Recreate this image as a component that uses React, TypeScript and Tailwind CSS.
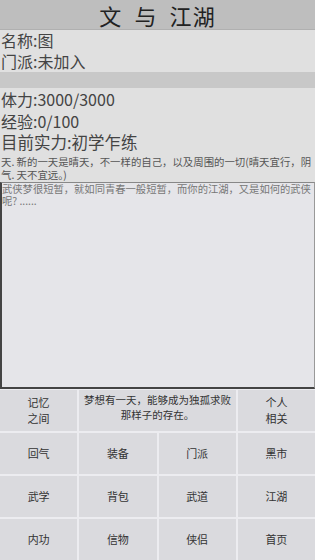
import React from 'react';

const font = { fontFamily: '"Noto Sans CJK SC", "Noto Sans", sans-serif' };

const rows = [
  ['回气', '装备', '门派', '黑市'],
  ['武学', '背包', '武道', '江湖'],
  ['内功', '信物', '侠侣', '首页'],
];

export default function App() {
  return (
    <div className="w-[315px] h-[560px] flex flex-col bg-[#e0e0e0] overflow-hidden" style={font}>
      {/* title */}
      <div className="h-[30px] shrink-0 bg-[#bebebe] border-b border-[#b0b0b0] flex items-center justify-center text-[22px] leading-none text-[#222] tracking-[0.05em]">
        文&nbsp;&nbsp;与&nbsp;&nbsp;江湖
      </div>

      {/* name / sect */}
      <div className="h-[42px] shrink-0 flex flex-col text-[16px] leading-[21px] text-[#444] pl-[1px]">
        <div>名称:图</div>
        <div>门派:未加入</div>
      </div>

      <div className="h-[16px] shrink-0 bg-[#c8c8c8]" />

      {/* stats */}
      <div className="flex flex-col text-[16px] leading-[21.5px] text-[#444] pl-[1px] pt-[1px]">
        <div>体力:3000/3000</div>
        <div>经验:0/100</div>
        <div className="text-[16.5px]">目前实力:初学乍练</div>
      </div>
      <div className="text-[10.4px] leading-[13px] text-[#555] pl-[1px] pt-[1px] pb-[1px]">
        天. 新的一天是晴天，不一样的自己，以及周围的一切(晴天宜行，阴气. 天不宜远。)
      </div>

      {/* log box */}
      <div className="h-[207px] shrink-0 bg-[#e5e5e9] border-l-2 border-b-2 border-t border-r border-l-[#444] border-b-[#444] border-t-[#888] border-r-[#999] text-[10.3px] leading-[12.5px] text-[#777]">
        武侠梦很短暂，就如同青春一般短暂，而你的江湖，又是如何的武侠呢? ......
      </div>

      {/* buttons */}
      <div className="flex-1 flex flex-col gap-[2px] bg-[#ececf0] pt-[1px] text-[11px] leading-[16px] text-[#333]">
        <div className="flex-1 flex gap-[2px]">
          <div className="w-[77px] bg-[#dadade] flex items-center justify-center text-center">
            记忆<br />之间
          </div>
          <div className="flex-1 bg-[#dadade] flex items-center justify-center text-center text-[10.5px] leading-[15px] pb-[6px]">
            梦想有一天，能够成为独孤求败<br />那样子的存在。
          </div>
          <div className="w-[77px] bg-[#dadade] flex items-center justify-center text-center">
            个人<br />相关
          </div>
        </div>
        {rows.map((r, i) => (
          <div key={i} className="flex-1 grid grid-cols-4 gap-[2px]">
            {r.map(t => (
              <div key={t} className="bg-[#dadade] flex items-center justify-center">{t}</div>
            ))}
          </div>
        ))}
      </div>
    </div>
  );
}
